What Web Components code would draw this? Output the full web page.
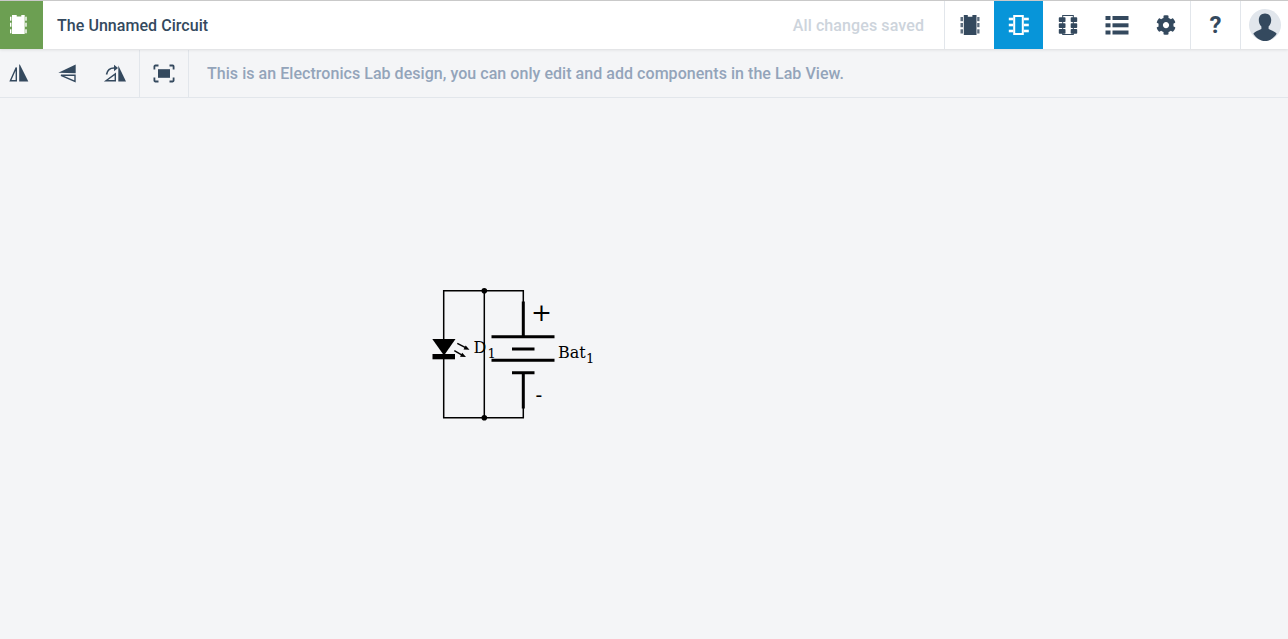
<!DOCTYPE html>
<html><head><meta charset="utf-8"><style>
html,body{margin:0;height:100%;background:#f4f5f7}
body{font-family:Roboto,sans-serif;overflow:hidden;display:flex;flex-direction:column;height:639px}
</style></head><body>
<app-header></app-header>
<app-toolbar></app-toolbar>
<circuit-canvas></circuit-canvas>
<script>
const C='#34495e';
const icons={
logo:`<svg width="24" height="24" viewBox="0 0 24 24"><path fill="#fff" fill-rule="evenodd" d="M5 2h12.700v19H5zM9.700 2v1.500h4.600V2z"/>${[3.7,9.7,16.3].map(y=>`<rect x="3" y="${y}" width="1.400" height="4" fill="#fff"/><rect x="18.300" y="${y}" width="1.400" height="4" fill="#fff"/>`).join('')}</svg>`,
chip:`<svg width="24" height="24" viewBox="0 0 24 24"><path fill="${C}" fill-rule="evenodd" d="M5.800 2h12.700v20H5.800zM9.800 2v1.700h4.600V2z"/>${[4,10,16.3].map(y=>`<rect x="2.500" y="${y}" width="2.500" height="4.200" fill="${C}" opacity=".8"/><rect x="19.200" y="${y}" width="2.300" height="4.200" fill="${C}" opacity=".8"/>`).join('')}</svg>`,
outline:`<svg width="24" height="24" viewBox="0 0 24 24"><rect x="7.200" y="3" width="8.600" height="18" fill="none" stroke="#fff" stroke-width="2"/>${[6,12,18].map(y=>`<rect x="1.800" y="${y-1.300}" width="4.400" height="2.600" fill="#fff"/><rect x="16.800" y="${y-1.300}" width="5" height="2.600" fill="#fff"/>`).join('')}</svg>`,
pins:`<svg width="24" height="24" viewBox="0 0 24 24"><rect x="6.700" y="2.500" width="10.600" height="19" fill="none" stroke="${C}" stroke-width="1"/>${[4.300,10.300,16].map(y=>`<rect x="2.800" y="${y}" width="6.700" height="4.800" rx=".8" fill="${C}"/><rect x="14.700" y="${y}" width="6.500" height="4.800" rx=".8" fill="${C}"/>`).join('')}</svg>`,
list:`<svg width="24" height="24" viewBox="0 0 24 24">${[3,10.300,17.500].map(y=>`<rect x="0.500" y="${y}" width="5" height="4" fill="${C}"/><rect x="7.500" y="${y}" width="16" height="4" fill="${C}"/>`).join('')}</svg>`,
gear:`<svg width="20" height="20" viewBox="0 0 512 512"><path fill="${C}" d="M487.400 315.700l-42.600-24.600c4.300-23.200 4.300-47 0-70.200l42.600-24.600c4.900-2.800 7.100-8.600 5.500-14-11.100-35.600-30-67.800-54.700-94.600-3.800-4.100-10-5.100-14.800-2.300L380.800 110c-17.900-15.400-38.500-27.300-60.800-35.100V25.800c0-5.600-3.900-10.500-9.400-11.700-36.700-8.200-74.300-7.800-109.200 0-5.500 1.200-9.400 6.100-9.400 11.700V75c-22.200 7.900-42.800 19.800-60.800 35.100L88.700 85.500c-4.900-2.800-11-1.900-14.800 2.300-24.700 26.700-43.600 58.900-54.700 94.600-1.700 5.400.6 11.200 5.500 14L67.300 221c-4.300 23.200-4.300 47 0 70.200l-42.600 24.600c-4.900 2.800-7.100 8.600-5.500 14 11.100 35.600 30 67.800 54.700 94.600 3.800 4.100 10 5.100 14.800 2.300l42.600-24.600c17.900 15.400 38.500 27.300 60.800 35.100v49.200c0 5.600 3.900 10.500 9.400 11.700 36.700 8.200 74.300 7.800 109.200 0 5.500-1.200 9.400-6.100 9.400-11.700v-49.200c22.200-7.900 42.800-19.800 60.800-35.100l42.600 24.600c4.900 2.800 11 1.900 14.800-2.300 24.700-26.700 43.600-58.900 54.700-94.600 1.500-5.500-.7-11.300-5.600-14.100zM256 336c-44.100 0-80-35.900-80-80s35.900-80 80-80 80 35.900 80 80-35.900 80-80 80z"/></svg>`,
avatar:`<svg width="32" height="32" viewBox="0 0 32 32"><circle cx="16" cy="16" r="16" fill="#e1e6ec"/><path fill="${C}" d="M16 4.500c-3.900 0-6.200 2.800-6.200 6.600 0 2.600 1 5 2.600 6.400v2.600c-2.600 1.300-6.700 2.400-8.100 4.600C7.200 29 11.300 32 16 32s8.800-3 11.700-7.300c-1.400-2.200-5.500-3.300-8.100-4.600v-2.600c1.600-1.400 2.600-3.800 2.600-6.400 0-3.800-2.300-6.600-6.200-6.600z"/></svg>`,
flipH:`<svg width="24" height="24" viewBox="0 0 24 24"><path fill="none" stroke="${C}" stroke-width="1.400" d="M9.300 5.500V18.800H3.400z"/><path fill="${C}" d="M12.200 2.500l.6 0 8.500 17h-9.100z"/></svg>`,
flipV:`<svg width="24" height="24" viewBox="0 0 24 24"><path fill="${C}" d="M3.300 10.800L20.700 2.500v8.700z"/><path fill="none" stroke="${C}" stroke-width="1.400" d="M6 13.300H20v6.200z"/></svg>`,
rotate:`<svg width="24" height="24" viewBox="0 0 24 24"><path fill="${C}" d="M15.300 3.500l7.700 16h-7.700z"/><path fill="none" stroke="${C}" stroke-width="1.400" d="M3 18.800h9.300v-6.800z"/><path fill="none" stroke="${C}" stroke-width="1.600" d="M3.500 12.500C4.300 8.500 7 5.800 11.500 6"/><path fill="${C}" d="M11 2.800l4 3.200-4 3.200z"/></svg>`,
fit:`<svg width="24" height="24" viewBox="0 0 24 24"><path fill="none" stroke="${C}" stroke-width="1.800" d="M2.400 7.500V4.400a.9.9 0 0 1 .9-.9H6.500M17.500 3.500h3.200a.9.900 0 0 1 .9.9V7.500M21.600 15.500v3.100a.9.900 0 0 1-.9.900H17.500M6.500 19.500H3.300a.9.900 0 0 1-.9-.9V15.500"/><rect x="6" y="7.200" width="12" height="8.600" fill="${C}"/></svg>`
};
class IconButton extends HTMLElement{
  constructor(){super();this.attachShadow({mode:'open'}).innerHTML=`<style>
  :host{display:flex;align-items:center;justify-content:center;flex:none;box-sizing:border-box;width:var(--w,49px);height:100%}
  :host([active]){background:#0795d9}
  :host([sep]){border-left:1px solid #e2e6eb}
  svg{display:block}
  .q{font:700 24px/1 Roboto,sans-serif;color:${C}}
  </style>${this.getAttribute('icon')==='q'?'<span class="q">?</span>':icons[this.getAttribute('icon')]}`;}
}
customElements.define('icon-button',IconButton);
class AppHeader extends HTMLElement{
  constructor(){super();this.attachShadow({mode:'open'}).innerHTML=`<style>
  :host{display:flex;flex:none;box-sizing:border-box;height:49px;background:#fff;border-top:1px solid #c9c9c9;position:relative;z-index:1;box-shadow:0 1px 3px rgba(0,0,0,.1)}
  .logo{width:43px;box-sizing:border-box;padding-right:5px;background:#6c9f52;display:flex;align-items:center;justify-content:center;flex:none}
  .title{margin-left:14px;font:500 16px/50px Roboto,sans-serif;letter-spacing:.05px;color:${C}}
  .saved{margin-left:auto;margin-right:20px;font:500 16px/50px Roboto,sans-serif;letter-spacing:.1px;color:#cdd4dc}
  .logo svg{display:block}
  .btns{display:flex;height:48px}
  </style><div class="logo">${icons.logo}</div><div class="title">The Unnamed Circuit</div><div class="saved">All changes saved</div>
  <div class="btns"><icon-button icon="chip" sep style="--w:50px"></icon-button><icon-button icon="outline" active></icon-button><icon-button icon="pins"></icon-button><icon-button icon="list"></icon-button><icon-button icon="gear"></icon-button><icon-button icon="q" sep style="--w:50px"></icon-button><icon-button icon="avatar" sep style="--w:48px"></icon-button></div>`;}
}
customElements.define('app-header',AppHeader);
class AppToolbar extends HTMLElement{
  constructor(){super();this.attachShadow({mode:'open'}).innerHTML=`<style>
  :host{display:flex;flex:none;box-sizing:border-box;height:49px;padding-top:1px;border-bottom:1px solid #e2e6eb;background:#f4f5f7}
  .msg{border-left:1px solid #e2e6eb;padding-left:18px;font:500 16px/47px Roboto,sans-serif;letter-spacing:.045px;color:#93a4ba}
  icon-button{--w:48px}
  .first{--w:38px;margin-right:5px}
  .fit{--w:49px}
  </style><icon-button class="first" icon="flipH"></icon-button><icon-button icon="flipV"></icon-button><icon-button icon="rotate"></icon-button><icon-button class="fit" icon="fit" sep></icon-button><div class="msg">This is an Electronics Lab design, you can only edit and add components in the Lab View.</div>`;}
}
customElements.define('app-toolbar',AppToolbar);
class CircuitCanvas extends HTMLElement{
  constructor(){super();this.attachShadow({mode:'open'}).innerHTML=`<style>
  :host{display:block;flex:1;position:relative;background:#f4f5f7}
  svg{position:absolute;left:425px;top:182px;overflow:visible}
  text{font-family:"DejaVu Serif",serif;fill:#000}
  </style>
  <svg width="180" height="150" viewBox="425 280 180 150">
   <g fill="none" stroke="#000" stroke-width="1.500">
    <path d="M523.300 302V290.700H443.700V417.700H523.300V408"/>
    <path d="M484.300 290.700V417.700"/>
   </g>
   <circle cx="484.300" cy="290.700" r="2.800"/><circle cx="484.300" cy="417.700" r="2.800"/>
   <g stroke="#000" stroke-width="3" fill="none">
    <path d="M523.300 301.500V336.700M491.500 336.700H554.500M512 349H534.500M491.500 360.300H554.500M512 372.700H534.500M523.300 372.700V408.500"/>
   </g>
   <path d="M432.300 339H455.500L444 355.500z"/><rect x="432.500" y="354" width="22.500" height="5.300"/>
   <g stroke="#000" stroke-width="1.500" fill="none">
    <path d="M457.300 343.300L466 347.800"/><path d="M454.300 350.700L462.500 355.300"/>
   </g>
   <path d="M469.500 349.800l-6-.2 2.200-4zM466 357l-6-.2 2.200-4z"/>
   <text x="473.500" y="353.300" font-size="16">D</text>
   <text x="487.500" y="358" font-size="13">1</text>
   <text x="558" y="357.500" font-size="16">Bat</text>
   <text x="586" y="362.500" font-size="13">1</text>
   <text x="531" y="321" font-size="25">+</text>
   <text x="535.500" y="402" font-size="20">-</text>
  </svg>`;}
}
customElements.define('circuit-canvas',CircuitCanvas);
</script>
</body></html>
